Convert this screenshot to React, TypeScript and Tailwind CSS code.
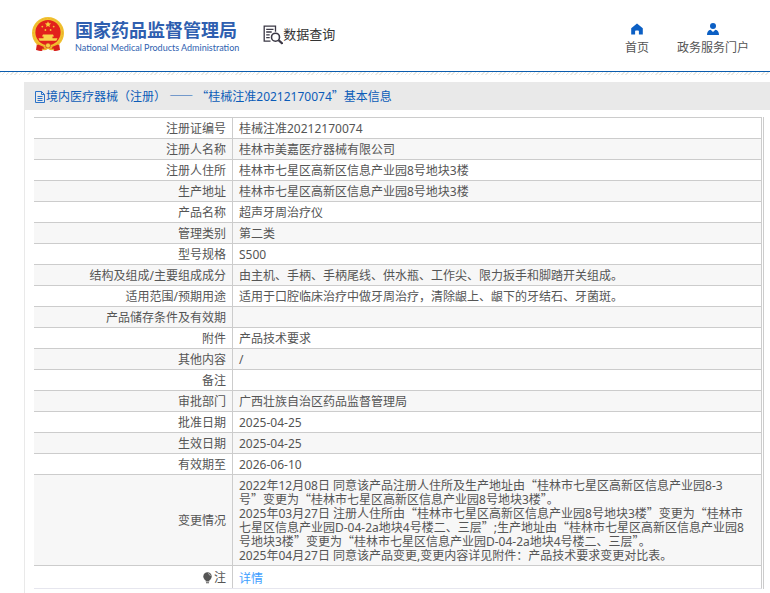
import type { ReactNode } from "react";

type Row = { label: string; value: ReactNode };

// Chinese quotation marks and dashes take their full-width form from the CJK family.
function Zh({ text }: { text: string }) {
  return (
    <>
      {text.split(/([“”—]+)/).map((part, i) =>
        /[“”—]/.test(part) ? (
          <span key={i} className="font-['Noto_Sans_CJK_SC',sans-serif] leading-none">
            {part}
          </span>
        ) : (
          part
        ),
      )}
    </>
  );
}

// The word joiner keeps a closing quotation mark together with the word after it.
const changes = [
  "2022年12月08日 同意该产品注册人住所及生产地址由“桂林市七星区高新区信息产业园8-3号”\u2060变更为“桂林市七星区高新区信息产业园8号地块3楼”。",
  "2025年03月27日 注册人住所由“桂林市七星区高新区信息产业园8号地块3楼”变更为“桂林市七星区信息产业园D-04-2a地块4号楼二、三层”;生产地址由“桂林市七星区高新区信息产业园8号地块3楼”变更为“桂林市七星区信息产业园D-04-2a地块4号楼二、三层”。",
  "2025年04月27日 同意该产品变更,变更内容详见附件：产品技术要求变更对比表。",
];

const rows: Row[] = [
  { label: "注册证编号", value: "桂械注准20212170074" },
  { label: "注册人名称", value: "桂林市美嘉医疗器械有限公司" },
  { label: "注册人住所", value: "桂林市七星区高新区信息产业园8号地块3楼" },
  { label: "生产地址", value: "桂林市七星区高新区信息产业园8号地块3楼" },
  { label: "产品名称", value: "超声牙周治疗仪" },
  { label: "管理类别", value: "第二类" },
  { label: "型号规格", value: "S500" },
  {
    label: "结构及组成/主要组成成分",
    value: "由主机、手柄、手柄尾线、供水瓶、工作尖、限力扳手和脚踏开关组成。",
  },
  {
    label: "适用范围/预期用途",
    value: "适用于口腔临床治疗中做牙周治疗，清除龈上、龈下的牙结石、牙菌斑。",
  },
  { label: "产品储存条件及有效期", value: "" },
  { label: "附件", value: "产品技术要求" },
  { label: "其他内容", value: "/" },
  { label: "备注", value: "" },
  { label: "审批部门", value: "广西壮族自治区药品监督管理局" },
  { label: "批准日期", value: "2025-04-25" },
  { label: "生效日期", value: "2025-04-25" },
  { label: "有效期至", value: "2026-06-10" },
  {
    label: "变更情况",
    value: changes.map((line) => (
      <p key={line}>
        <Zh text={line} />
      </p>
    )),
  },
];

function Emblem() {
  return (
    <svg viewBox="0 0 32 35" className="h-[35px] w-8 shrink-0" aria-hidden="true">
      <path d="M5 26h22l1 7-5 1-3-2h-8l-3 2-5-1z" fill="#d8201c" />
      <circle cx="16" cy="16" r="16" fill="#f2c230" />
      <circle cx="16" cy="16" r="14.5" fill="none" stroke="#e8b42c" strokeWidth="1" strokeDasharray="2 1.4" />
      <circle cx="16" cy="15.5" r="12.6" fill="#e2211c" />
      <path d="M16 4.300l.9 2 2.200.2-1.700 1.400.5 2.100-1.900-1.100-1.900 1.100.5-2.100-1.700-1.400 2.200-.2z" fill="#f7d23c" />
      <g fill="#f5c535">
        <circle cx="10.300" cy="9.600" r=".9" />
        <circle cx="21.700" cy="9.600" r=".9" />
        <circle cx="13.400" cy="13" r=".9" />
        <circle cx="18.600" cy="13" r=".9" />
      </g>
      <path d="M11 17.600h10l1 2H10zM11.500 19.600h9v1.600h-9zM6.500 21.200h19l-1.200 2.600H7.700z" fill="#f8d34a" />
      <path d="M5 26c3 1 6 2.500 8 2.900h6c2-.4 5-1.900 8-2.900l-1.500 3-6 1.500h-7l-6-1.500z" fill="#edb52b" />
      <path d="M6 27.500l6 2.500-2 4-5-1zM26 27.500l-6 2.500 2 4 5-1z" fill="#d8201c" />
      <circle cx="16" cy="28.500" r="2.500" fill="#f7d047" stroke="#cf3a1d" strokeWidth=".7" />
      <path d="M10 32c2 1.500 4 .5 6-.8 2 1.300 4 2.300 6 .8" fill="none" stroke="#edb52b" strokeWidth="1.200" />
    </svg>
  );
}

function QueryIcon() {
  return (
    <svg viewBox="0 0 20 20" className="mt-[3px] h-5 w-5 shrink-0" fill="none" stroke="#3b3845" aria-hidden="true">
      <path d="M7.500 16.200H1.200V1.200h11.300v5.500" strokeWidth="1.300" />
      <path d="M3.200 4.300h7.300M3.200 7h5.500M3.200 9.800h3.500M3.200 12.700h3.500" strokeWidth="1.300" />
      <circle cx="12.500" cy="12.200" r="4" strokeWidth="1.600" />
      <path d="M15.500 15.200l4 3.500" strokeWidth="2.200" />
    </svg>
  );
}

function HomeIcon() {
  return (
    <svg viewBox="0 0 12 12" className="h-3 w-3" fill="#0b5fc4" aria-hidden="true">
      <path d="M6 .4L.2 5.200V11.500h3.900V8.200c0-.5.3-.8.8-.8h2.200c.5 0 .8.3.8.8v3.300h3.900V5.200z" />
    </svg>
  );
}

function UserIcon() {
  return (
    <svg viewBox="0 0 12 12" className="h-3 w-3" fill="#0b5fc4" aria-hidden="true">
      <circle cx="6" cy="3.100" r="3" />
      <path d="M0 12c0-3 1.200-4.700 3.600-5.200L6 9l2.400-2.200C10.800 7.300 12 9 12 12z" />
    </svg>
  );
}

function DocIcon() {
  return (
    <svg viewBox="0 0 10 12" className="h-3 w-[10px] shrink-0" fill="none" stroke="#2b72c8" aria-hidden="true">
      <path d="M.5.5h6l3 3v8h-9zM6.500.5v3h3M2.500 5.500h5M2.500 7.500h5M2.500 9.500h5" />
    </svg>
  );
}

function BulbIcon() {
  return (
    <svg viewBox="0 0 9 12" className="h-3 w-[9px]" aria-hidden="true">
      <circle cx="4.500" cy="4.500" r="4.200" fill="#555" />
      <path d="M2.700 8h3.600v1.500H2.700zM3 10.200h3v1H3z" fill="#555" />
      <path d="M5.200 1.600c1.200.3 1.900 1 2.100 2.200" stroke="#ddd" strokeWidth=".8" fill="none" />
    </svg>
  );
}

export default function App() {
  return (
    <div
      className="min-h-screen bg-white font-['Noto_Sans','Noto_Sans_CJK_SC',sans-serif] text-xs leading-[14px] text-[#555]"
      lang="zh-CN"
    >
      <header>
        <div className="flex h-[71px] items-center pr-[21px] pl-8">
          <a href="#home" className="flex items-center gap-[11px] pb-[2px] text-[#2f5fb0]">
            <Emblem />
            <span className="flex flex-col gap-[2px] pt-1">
              <span className="text-lg leading-5 font-bold whitespace-nowrap">国家药品监督管理局</span>
              <span className="font-[Lato,sans-serif] text-[9px] leading-3 font-normal whitespace-nowrap">
                National Medical Products Administration
              </span>
            </span>
          </a>
          <a href="#query" className="ml-6 flex items-center pb-1 text-[13px] whitespace-nowrap text-[#333]">
            <QueryIcon />
            数据查询
          </a>
          <nav className="ml-auto flex gap-7 pt-[6px]">
            <a href="#index" className="flex flex-col items-center gap-[6px]">
              <HomeIcon />
              首页
            </a>
            <a href="#portal" className="flex flex-col items-center gap-[6px]">
              <UserIcon />
              政务服务门户
            </a>
          </nav>
        </div>
        <div className="h-px bg-[#0b5cae]" />
        <div className="h-[3px] bg-[repeating-linear-gradient(135deg,#e9e9e2_0px,#e9e9e2_1px,#ffffff_1px,#ffffff_3px)]" />
      </header>

      <main className="mt-[7px] ml-6">
        <h1 className="flex h-7 items-center bg-[#e9e9e9] pt-[2px] pl-[11px] text-[#0b5cb8]">
          <DocIcon />
          <span className="ml-px whitespace-pre">
            <Zh text="境内医疗器械（注册） —— “桂械注准20212170074”基本信息" />
          </span>
        </h1>
        <div className="border-l border-[#e9e9e9] pt-[7px] pr-[6px] pb-1 pl-[9px]">
          <div className="border-r border-[#ccc] pr-px">
            <table className="w-full border-separate border-spacing-0 border-r border-b border-r-[#ccc] border-b-[#e6e6ee]">
              <tbody>
                {rows.map((row) => (
                  <tr key={row.label} className="even:bg-[#f7f7f7]">
                    <th
                      scope="row"
                      className="h-[21px] w-[199px] border-t border-r border-[#ccc] pt-1 pr-[6px] pb-[2px] text-right font-normal"
                    >
                      {row.label}
                    </th>
                    <td className="border-t border-[#ccc] pt-1 pr-2 pb-[2px] pl-[6px]">{row.value}</td>
                  </tr>
                ))}
                <tr>
                  <th
                    scope="row"
                    className="h-[23px] w-[199px] border-t border-r border-[#ccc] pt-1 pr-[6px] pb-[2px] text-right font-normal"
                  >
                    <span className="flex items-center justify-end gap-[2px]">
                      <BulbIcon />注
                    </span>
                  </th>
                  <td className="border-t border-[#ccc] pt-[6px] pr-2 pb-[2px] pl-[6px]">
                    <a href="#detail" className="text-[#409eff]">
                      详情
                    </a>
                  </td>
                </tr>
              </tbody>
            </table>
          </div>
        </div>
      </main>
    </div>
  );
}
